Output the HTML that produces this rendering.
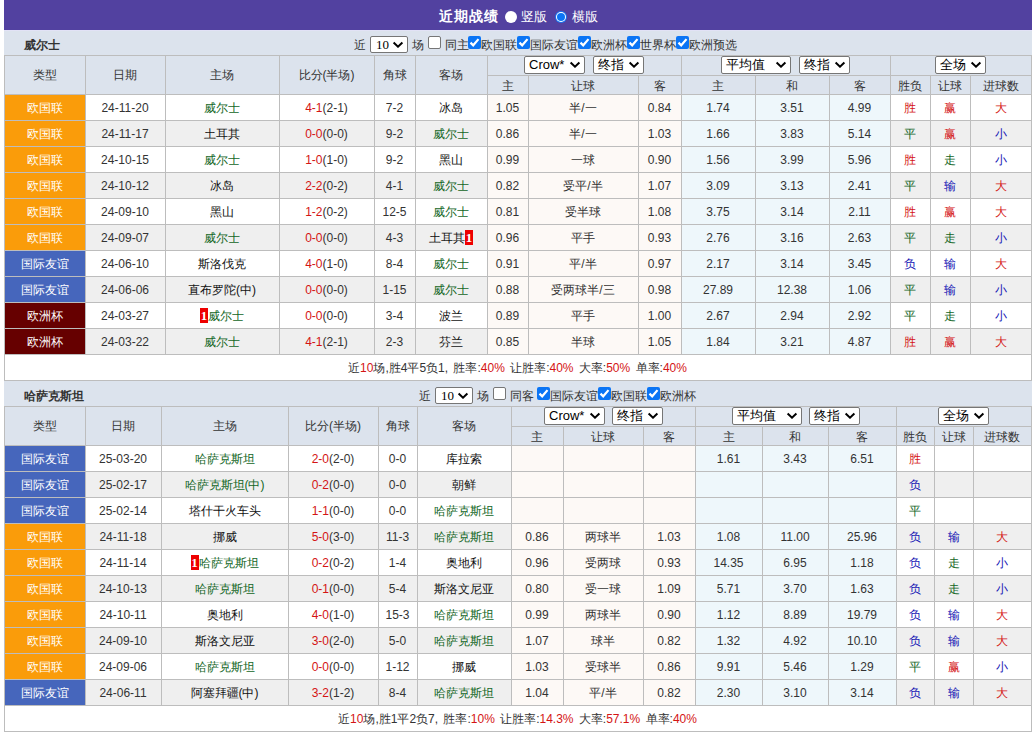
<!DOCTYPE html>
<html><head><meta charset="utf-8"><style>
html,body{margin:0;padding:0;background:#fff;width:1032px;height:732px;overflow:hidden}
body{position:relative;font-family:'Liberation Sans', sans-serif;font-size:12px}
body>div{position:absolute}
.c{display:flex;align-items:center;justify-content:center;white-space:nowrap;font-size:12px;line-height:16px;box-sizing:border-box;padding-right:1px}
.sel{background:#fff;border:1px solid #767676;border-radius:2px;color:#000}
.sel span{display:block}
.bd{display:inline-block;background:#e00;color:#fff;width:8px;height:15px;line-height:15px;text-align:center;font-size:13px;font-weight:bold;font-family:'Liberation Serif',serif;vertical-align:top;position:relative;top:0px}
</style></head><body>
<div style="left:4px;top:0px;width:1028px;height:30px;background:#5241a0;"></div><div style="left:439px;top:5px;white-space:nowrap;color:#fff;font-weight:bold;font-size:14px;letter-spacing:1px;line-height:22px">近期战绩</div><div style="left:505px;top:11px;width:12px;height:12px;border-radius:50%;background:#fff"></div><div style="left:521px;top:6px;white-space:nowrap;color:#fff;font-size:13px;line-height:22px">竖版</div><div style="left:555px;top:11px;width:12px;height:12px;border-radius:50%;background:#1a73f0"></div><div style="left:556px;top:12px;width:10px;height:10px;border-radius:50%;background:#fff"></div><div style="left:557px;top:13px;width:8px;height:8px;border-radius:50%;background:#0b75f5"></div><div style="left:572px;top:6px;white-space:nowrap;color:#fff;font-size:13px;line-height:22px">横版</div><div style="left:4px;top:30px;width:1028px;height:25px;background:#dce3ed;"></div><div style="left:24px;top:36px;white-space:nowrap;font-weight:bold;font-size:12px;line-height:18px;color:#333">威尔士</div><div style="left:4px;top:30px;width:1028px;height:1px;background:#e2e2f6;"></div><div style="left:354px;top:37px;white-space:nowrap;font-size:12px;line-height:17px;color:#333">近</div><div class="sel" style="left:370px;top:36px;width:36px;height:15px;"><span style="position:absolute;left:5px;top:0px;line-height:15px;font-size:13px;font-family:'Liberation Serif', serif">10</span><span style="position:absolute;left:21px;top:4px"><svg width="12" height="7" viewBox="-1 -1 12 7" style="display:block"><path d="M0.6 0.6 L5.0 4.7 L9.4 0.6" fill="none" stroke="#000" stroke-width="2" stroke-linecap="butt" stroke-linejoin="miter"/></svg></span></div><div style="left:412px;top:37px;white-space:nowrap;font-size:12px;line-height:17px;color:#333">场</div><div style="left:428px;top:36px;width:11px;height:11px;background:#fff;border:1px solid #767676;border-radius:2px"></div><div style="left:445px;top:37px;white-space:nowrap;font-size:12px;line-height:17px;color:#333">同主</div><div style="left:468px;top:36px;width:13px;height:13px;background:#0b75f5;border-radius:2px"><svg width="13" height="13" viewBox="0 0 13 13" style="position:absolute;left:0;top:0"><path d="M2.5 6.6 L5.2 9.3 L10.5 3.1" fill="none" stroke="#fff" stroke-width="2.2"/></svg></div><div style="left:481px;top:37px;white-space:nowrap;font-size:12px;line-height:17px;color:#333">欧国联</div><div style="left:517px;top:36px;width:13px;height:13px;background:#0b75f5;border-radius:2px"><svg width="13" height="13" viewBox="0 0 13 13" style="position:absolute;left:0;top:0"><path d="M2.5 6.6 L5.2 9.3 L10.5 3.1" fill="none" stroke="#fff" stroke-width="2.2"/></svg></div><div style="left:530px;top:37px;white-space:nowrap;font-size:12px;line-height:17px;color:#333">国际友谊</div><div style="left:578px;top:36px;width:13px;height:13px;background:#0b75f5;border-radius:2px"><svg width="13" height="13" viewBox="0 0 13 13" style="position:absolute;left:0;top:0"><path d="M2.5 6.6 L5.2 9.3 L10.5 3.1" fill="none" stroke="#fff" stroke-width="2.2"/></svg></div><div style="left:591px;top:37px;white-space:nowrap;font-size:12px;line-height:17px;color:#333">欧洲杯</div><div style="left:627px;top:36px;width:13px;height:13px;background:#0b75f5;border-radius:2px"><svg width="13" height="13" viewBox="0 0 13 13" style="position:absolute;left:0;top:0"><path d="M2.5 6.6 L5.2 9.3 L10.5 3.1" fill="none" stroke="#fff" stroke-width="2.2"/></svg></div><div style="left:640px;top:37px;white-space:nowrap;font-size:12px;line-height:17px;color:#333">世界杯</div><div style="left:676px;top:36px;width:13px;height:13px;background:#0b75f5;border-radius:2px"><svg width="13" height="13" viewBox="0 0 13 13" style="position:absolute;left:0;top:0"><path d="M2.5 6.6 L5.2 9.3 L10.5 3.1" fill="none" stroke="#fff" stroke-width="2.2"/></svg></div><div style="left:689px;top:37px;white-space:nowrap;font-size:12px;line-height:17px;color:#333">欧洲预选</div><div style="left:4px;top:55px;width:1028px;height:326px;background:#bdbdbd;"></div><div class="c" style="left:5px;top:56px;width:80px;height:38px;background:#dce3ed;color:#333"><span>类型</span></div><div class="c" style="left:86px;top:56px;width:79px;height:38px;background:#dce3ed;color:#333"><span>日期</span></div><div class="c" style="left:166px;top:56px;width:113px;height:38px;background:#dce3ed;color:#333"><span>主场</span></div><div class="c" style="left:280px;top:56px;width:94px;height:38px;background:#dce3ed;color:#333"><span>比分(半场)</span></div><div class="c" style="left:375px;top:56px;width:40px;height:38px;background:#dce3ed;color:#333"><span>角球</span></div><div class="c" style="left:416px;top:56px;width:71px;height:38px;background:#dce3ed;color:#333"><span>客场</span></div><div class="c" style="left:488px;top:56px;width:193px;height:19px;background:#dce3ed"><span></span></div><div class="c" style="left:682px;top:56px;width:208px;height:19px;background:#dce3ed"><span></span></div><div class="c" style="left:891px;top:56px;width:140px;height:19px;background:#dce3ed"><span></span></div><div class="c" style="left:488px;top:76px;width:40px;height:18px;background:#dce3ed;color:#333;padding-top:1px;box-sizing:border-box"><span>主</span></div><div class="c" style="left:529px;top:76px;width:109px;height:18px;background:#dce3ed;color:#333;padding-top:1px;box-sizing:border-box"><span>让球</span></div><div class="c" style="left:639px;top:76px;width:42px;height:18px;background:#dce3ed;color:#333;padding-top:1px;box-sizing:border-box"><span>客</span></div><div class="c" style="left:682px;top:76px;width:73px;height:18px;background:#dce3ed;color:#333;padding-top:1px;box-sizing:border-box"><span>主</span></div><div class="c" style="left:756px;top:76px;width:73px;height:18px;background:#dce3ed;color:#333;padding-top:1px;box-sizing:border-box"><span>和</span></div><div class="c" style="left:830px;top:76px;width:60px;height:18px;background:#dce3ed;color:#333;padding-top:1px;box-sizing:border-box"><span>客</span></div><div class="c" style="left:891px;top:76px;width:39px;height:18px;background:#dce3ed;color:#333;padding-top:1px;box-sizing:border-box"><span>胜负</span></div><div class="c" style="left:931px;top:76px;width:39px;height:18px;background:#dce3ed;color:#333;padding-top:1px;box-sizing:border-box"><span>让球</span></div><div class="c" style="left:971px;top:76px;width:60px;height:18px;background:#dce3ed;color:#333;padding-top:1px;box-sizing:border-box"><span>进球数</span></div><div class="c" style="left:5px;top:95px;width:80px;height:25px;background:#fa9c0a;color:#fff"><span>欧国联</span></div><div class="c" style="left:86px;top:95px;width:79px;height:25px;background:#fff;color:#333"><span>24-11-20</span></div><div class="c" style="left:166px;top:95px;width:113px;height:25px;background:#fff;color:#111"><span><span style="color:#12661e">威尔士</span></span></div><div class="c" style="left:280px;top:95px;width:94px;height:25px;background:#fff;color:#333"><span><span style="color:#d41414">4-1</span>(2-1)</span></div><div class="c" style="left:375px;top:95px;width:40px;height:25px;background:#fff;color:#333"><span>7-2</span></div><div class="c" style="left:416px;top:95px;width:71px;height:25px;background:#fff;color:#111"><span>冰岛</span></div><div class="c" style="left:488px;top:95px;width:40px;height:25px;background:#fdf9f6;color:#333"><span>1.05</span></div><div class="c" style="left:529px;top:95px;width:109px;height:25px;background:#fdf9f6;color:#333"><span>半/一</span></div><div class="c" style="left:639px;top:95px;width:42px;height:25px;background:#fdf9f6;color:#333"><span>0.84</span></div><div class="c" style="left:682px;top:95px;width:73px;height:25px;background:#eef7fb;color:#333"><span>1.74</span></div><div class="c" style="left:756px;top:95px;width:73px;height:25px;background:#eef7fb;color:#333"><span>3.51</span></div><div class="c" style="left:830px;top:95px;width:60px;height:25px;background:#eef7fb;color:#333"><span>4.99</span></div><div class="c" style="left:891px;top:95px;width:39px;height:25px;background:#fff;color:#d41414"><span>胜</span></div><div class="c" style="left:931px;top:95px;width:39px;height:25px;background:#fff;color:#d41414"><span>赢</span></div><div class="c" style="left:971px;top:95px;width:60px;height:25px;background:#fff;color:#d41414"><span>大</span></div><div class="c" style="left:5px;top:121px;width:80px;height:25px;background:#fa9c0a;color:#fff"><span>欧国联</span></div><div class="c" style="left:86px;top:121px;width:79px;height:25px;background:#efefef;color:#333"><span>24-11-17</span></div><div class="c" style="left:166px;top:121px;width:113px;height:25px;background:#efefef;color:#111"><span>土耳其</span></div><div class="c" style="left:280px;top:121px;width:94px;height:25px;background:#efefef;color:#333"><span><span style="color:#d41414">0-0</span>(0-0)</span></div><div class="c" style="left:375px;top:121px;width:40px;height:25px;background:#efefef;color:#333"><span>9-2</span></div><div class="c" style="left:416px;top:121px;width:71px;height:25px;background:#efefef;color:#111"><span><span style="color:#12661e">威尔士</span></span></div><div class="c" style="left:488px;top:121px;width:40px;height:25px;background:#fdf9f6;color:#333"><span>0.86</span></div><div class="c" style="left:529px;top:121px;width:109px;height:25px;background:#fdf9f6;color:#333"><span>半/一</span></div><div class="c" style="left:639px;top:121px;width:42px;height:25px;background:#fdf9f6;color:#333"><span>1.03</span></div><div class="c" style="left:682px;top:121px;width:73px;height:25px;background:#eef7fb;color:#333"><span>1.66</span></div><div class="c" style="left:756px;top:121px;width:73px;height:25px;background:#eef7fb;color:#333"><span>3.83</span></div><div class="c" style="left:830px;top:121px;width:60px;height:25px;background:#eef7fb;color:#333"><span>5.14</span></div><div class="c" style="left:891px;top:121px;width:39px;height:25px;background:#efefef;color:#12661e"><span>平</span></div><div class="c" style="left:931px;top:121px;width:39px;height:25px;background:#efefef;color:#d41414"><span>赢</span></div><div class="c" style="left:971px;top:121px;width:60px;height:25px;background:#efefef;color:#1414b4"><span>小</span></div><div class="c" style="left:5px;top:147px;width:80px;height:25px;background:#fa9c0a;color:#fff"><span>欧国联</span></div><div class="c" style="left:86px;top:147px;width:79px;height:25px;background:#fff;color:#333"><span>24-10-15</span></div><div class="c" style="left:166px;top:147px;width:113px;height:25px;background:#fff;color:#111"><span><span style="color:#12661e">威尔士</span></span></div><div class="c" style="left:280px;top:147px;width:94px;height:25px;background:#fff;color:#333"><span><span style="color:#d41414">1-0</span>(1-0)</span></div><div class="c" style="left:375px;top:147px;width:40px;height:25px;background:#fff;color:#333"><span>9-2</span></div><div class="c" style="left:416px;top:147px;width:71px;height:25px;background:#fff;color:#111"><span>黑山</span></div><div class="c" style="left:488px;top:147px;width:40px;height:25px;background:#fdf9f6;color:#333"><span>0.99</span></div><div class="c" style="left:529px;top:147px;width:109px;height:25px;background:#fdf9f6;color:#333"><span>一球</span></div><div class="c" style="left:639px;top:147px;width:42px;height:25px;background:#fdf9f6;color:#333"><span>0.90</span></div><div class="c" style="left:682px;top:147px;width:73px;height:25px;background:#eef7fb;color:#333"><span>1.56</span></div><div class="c" style="left:756px;top:147px;width:73px;height:25px;background:#eef7fb;color:#333"><span>3.99</span></div><div class="c" style="left:830px;top:147px;width:60px;height:25px;background:#eef7fb;color:#333"><span>5.96</span></div><div class="c" style="left:891px;top:147px;width:39px;height:25px;background:#fff;color:#d41414"><span>胜</span></div><div class="c" style="left:931px;top:147px;width:39px;height:25px;background:#fff;color:#12661e"><span>走</span></div><div class="c" style="left:971px;top:147px;width:60px;height:25px;background:#fff;color:#1414b4"><span>小</span></div><div class="c" style="left:5px;top:173px;width:80px;height:25px;background:#fa9c0a;color:#fff"><span>欧国联</span></div><div class="c" style="left:86px;top:173px;width:79px;height:25px;background:#efefef;color:#333"><span>24-10-12</span></div><div class="c" style="left:166px;top:173px;width:113px;height:25px;background:#efefef;color:#111"><span>冰岛</span></div><div class="c" style="left:280px;top:173px;width:94px;height:25px;background:#efefef;color:#333"><span><span style="color:#d41414">2-2</span>(0-2)</span></div><div class="c" style="left:375px;top:173px;width:40px;height:25px;background:#efefef;color:#333"><span>4-1</span></div><div class="c" style="left:416px;top:173px;width:71px;height:25px;background:#efefef;color:#111"><span><span style="color:#12661e">威尔士</span></span></div><div class="c" style="left:488px;top:173px;width:40px;height:25px;background:#fdf9f6;color:#333"><span>0.82</span></div><div class="c" style="left:529px;top:173px;width:109px;height:25px;background:#fdf9f6;color:#333"><span>受平/半</span></div><div class="c" style="left:639px;top:173px;width:42px;height:25px;background:#fdf9f6;color:#333"><span>1.07</span></div><div class="c" style="left:682px;top:173px;width:73px;height:25px;background:#eef7fb;color:#333"><span>3.09</span></div><div class="c" style="left:756px;top:173px;width:73px;height:25px;background:#eef7fb;color:#333"><span>3.13</span></div><div class="c" style="left:830px;top:173px;width:60px;height:25px;background:#eef7fb;color:#333"><span>2.41</span></div><div class="c" style="left:891px;top:173px;width:39px;height:25px;background:#efefef;color:#12661e"><span>平</span></div><div class="c" style="left:931px;top:173px;width:39px;height:25px;background:#efefef;color:#1414b4"><span>输</span></div><div class="c" style="left:971px;top:173px;width:60px;height:25px;background:#efefef;color:#d41414"><span>大</span></div><div class="c" style="left:5px;top:199px;width:80px;height:25px;background:#fa9c0a;color:#fff"><span>欧国联</span></div><div class="c" style="left:86px;top:199px;width:79px;height:25px;background:#fff;color:#333"><span>24-09-10</span></div><div class="c" style="left:166px;top:199px;width:113px;height:25px;background:#fff;color:#111"><span>黑山</span></div><div class="c" style="left:280px;top:199px;width:94px;height:25px;background:#fff;color:#333"><span><span style="color:#d41414">1-2</span>(0-2)</span></div><div class="c" style="left:375px;top:199px;width:40px;height:25px;background:#fff;color:#333"><span>12-5</span></div><div class="c" style="left:416px;top:199px;width:71px;height:25px;background:#fff;color:#111"><span><span style="color:#12661e">威尔士</span></span></div><div class="c" style="left:488px;top:199px;width:40px;height:25px;background:#fdf9f6;color:#333"><span>0.81</span></div><div class="c" style="left:529px;top:199px;width:109px;height:25px;background:#fdf9f6;color:#333"><span>受半球</span></div><div class="c" style="left:639px;top:199px;width:42px;height:25px;background:#fdf9f6;color:#333"><span>1.08</span></div><div class="c" style="left:682px;top:199px;width:73px;height:25px;background:#eef7fb;color:#333"><span>3.75</span></div><div class="c" style="left:756px;top:199px;width:73px;height:25px;background:#eef7fb;color:#333"><span>3.14</span></div><div class="c" style="left:830px;top:199px;width:60px;height:25px;background:#eef7fb;color:#333"><span>2.11</span></div><div class="c" style="left:891px;top:199px;width:39px;height:25px;background:#fff;color:#d41414"><span>胜</span></div><div class="c" style="left:931px;top:199px;width:39px;height:25px;background:#fff;color:#d41414"><span>赢</span></div><div class="c" style="left:971px;top:199px;width:60px;height:25px;background:#fff;color:#d41414"><span>大</span></div><div class="c" style="left:5px;top:225px;width:80px;height:25px;background:#fa9c0a;color:#fff"><span>欧国联</span></div><div class="c" style="left:86px;top:225px;width:79px;height:25px;background:#efefef;color:#333"><span>24-09-07</span></div><div class="c" style="left:166px;top:225px;width:113px;height:25px;background:#efefef;color:#111"><span><span style="color:#12661e">威尔士</span></span></div><div class="c" style="left:280px;top:225px;width:94px;height:25px;background:#efefef;color:#333"><span><span style="color:#d41414">0-0</span>(0-0)</span></div><div class="c" style="left:375px;top:225px;width:40px;height:25px;background:#efefef;color:#333"><span>4-3</span></div><div class="c" style="left:416px;top:225px;width:71px;height:25px;background:#efefef;color:#111"><span>土耳其<span class="bd">1</span></span></div><div class="c" style="left:488px;top:225px;width:40px;height:25px;background:#fdf9f6;color:#333"><span>0.96</span></div><div class="c" style="left:529px;top:225px;width:109px;height:25px;background:#fdf9f6;color:#333"><span>平手</span></div><div class="c" style="left:639px;top:225px;width:42px;height:25px;background:#fdf9f6;color:#333"><span>0.93</span></div><div class="c" style="left:682px;top:225px;width:73px;height:25px;background:#eef7fb;color:#333"><span>2.76</span></div><div class="c" style="left:756px;top:225px;width:73px;height:25px;background:#eef7fb;color:#333"><span>3.16</span></div><div class="c" style="left:830px;top:225px;width:60px;height:25px;background:#eef7fb;color:#333"><span>2.63</span></div><div class="c" style="left:891px;top:225px;width:39px;height:25px;background:#efefef;color:#12661e"><span>平</span></div><div class="c" style="left:931px;top:225px;width:39px;height:25px;background:#efefef;color:#12661e"><span>走</span></div><div class="c" style="left:971px;top:225px;width:60px;height:25px;background:#efefef;color:#1414b4"><span>小</span></div><div class="c" style="left:5px;top:251px;width:80px;height:25px;background:#4666bc;color:#fff"><span>国际友谊</span></div><div class="c" style="left:86px;top:251px;width:79px;height:25px;background:#fff;color:#333"><span>24-06-10</span></div><div class="c" style="left:166px;top:251px;width:113px;height:25px;background:#fff;color:#111"><span>斯洛伐克</span></div><div class="c" style="left:280px;top:251px;width:94px;height:25px;background:#fff;color:#333"><span><span style="color:#d41414">4-0</span>(1-0)</span></div><div class="c" style="left:375px;top:251px;width:40px;height:25px;background:#fff;color:#333"><span>8-4</span></div><div class="c" style="left:416px;top:251px;width:71px;height:25px;background:#fff;color:#111"><span><span style="color:#12661e">威尔士</span></span></div><div class="c" style="left:488px;top:251px;width:40px;height:25px;background:#fdf9f6;color:#333"><span>0.91</span></div><div class="c" style="left:529px;top:251px;width:109px;height:25px;background:#fdf9f6;color:#333"><span>平/半</span></div><div class="c" style="left:639px;top:251px;width:42px;height:25px;background:#fdf9f6;color:#333"><span>0.97</span></div><div class="c" style="left:682px;top:251px;width:73px;height:25px;background:#eef7fb;color:#333"><span>2.17</span></div><div class="c" style="left:756px;top:251px;width:73px;height:25px;background:#eef7fb;color:#333"><span>3.14</span></div><div class="c" style="left:830px;top:251px;width:60px;height:25px;background:#eef7fb;color:#333"><span>3.45</span></div><div class="c" style="left:891px;top:251px;width:39px;height:25px;background:#fff;color:#1414b4"><span>负</span></div><div class="c" style="left:931px;top:251px;width:39px;height:25px;background:#fff;color:#1414b4"><span>输</span></div><div class="c" style="left:971px;top:251px;width:60px;height:25px;background:#fff;color:#d41414"><span>大</span></div><div class="c" style="left:5px;top:277px;width:80px;height:25px;background:#4666bc;color:#fff"><span>国际友谊</span></div><div class="c" style="left:86px;top:277px;width:79px;height:25px;background:#efefef;color:#333"><span>24-06-06</span></div><div class="c" style="left:166px;top:277px;width:113px;height:25px;background:#efefef;color:#111"><span>直布罗陀(中)</span></div><div class="c" style="left:280px;top:277px;width:94px;height:25px;background:#efefef;color:#333"><span><span style="color:#d41414">0-0</span>(0-0)</span></div><div class="c" style="left:375px;top:277px;width:40px;height:25px;background:#efefef;color:#333"><span>1-15</span></div><div class="c" style="left:416px;top:277px;width:71px;height:25px;background:#efefef;color:#111"><span><span style="color:#12661e">威尔士</span></span></div><div class="c" style="left:488px;top:277px;width:40px;height:25px;background:#fdf9f6;color:#333"><span>0.88</span></div><div class="c" style="left:529px;top:277px;width:109px;height:25px;background:#fdf9f6;color:#333"><span>受两球半/三</span></div><div class="c" style="left:639px;top:277px;width:42px;height:25px;background:#fdf9f6;color:#333"><span>0.98</span></div><div class="c" style="left:682px;top:277px;width:73px;height:25px;background:#eef7fb;color:#333"><span>27.89</span></div><div class="c" style="left:756px;top:277px;width:73px;height:25px;background:#eef7fb;color:#333"><span>12.38</span></div><div class="c" style="left:830px;top:277px;width:60px;height:25px;background:#eef7fb;color:#333"><span>1.06</span></div><div class="c" style="left:891px;top:277px;width:39px;height:25px;background:#efefef;color:#12661e"><span>平</span></div><div class="c" style="left:931px;top:277px;width:39px;height:25px;background:#efefef;color:#1414b4"><span>输</span></div><div class="c" style="left:971px;top:277px;width:60px;height:25px;background:#efefef;color:#1414b4"><span>小</span></div><div class="c" style="left:5px;top:303px;width:80px;height:25px;background:#660000;color:#fff"><span>欧洲杯</span></div><div class="c" style="left:86px;top:303px;width:79px;height:25px;background:#fff;color:#333"><span>24-03-27</span></div><div class="c" style="left:166px;top:303px;width:113px;height:25px;background:#fff;color:#111"><span><span class="bd">1</span><span style="color:#12661e">威尔士</span></span></div><div class="c" style="left:280px;top:303px;width:94px;height:25px;background:#fff;color:#333"><span><span style="color:#d41414">0-0</span>(0-0)</span></div><div class="c" style="left:375px;top:303px;width:40px;height:25px;background:#fff;color:#333"><span>3-4</span></div><div class="c" style="left:416px;top:303px;width:71px;height:25px;background:#fff;color:#111"><span>波兰</span></div><div class="c" style="left:488px;top:303px;width:40px;height:25px;background:#fdf9f6;color:#333"><span>0.89</span></div><div class="c" style="left:529px;top:303px;width:109px;height:25px;background:#fdf9f6;color:#333"><span>平手</span></div><div class="c" style="left:639px;top:303px;width:42px;height:25px;background:#fdf9f6;color:#333"><span>1.00</span></div><div class="c" style="left:682px;top:303px;width:73px;height:25px;background:#eef7fb;color:#333"><span>2.67</span></div><div class="c" style="left:756px;top:303px;width:73px;height:25px;background:#eef7fb;color:#333"><span>2.94</span></div><div class="c" style="left:830px;top:303px;width:60px;height:25px;background:#eef7fb;color:#333"><span>2.92</span></div><div class="c" style="left:891px;top:303px;width:39px;height:25px;background:#fff;color:#12661e"><span>平</span></div><div class="c" style="left:931px;top:303px;width:39px;height:25px;background:#fff;color:#12661e"><span>走</span></div><div class="c" style="left:971px;top:303px;width:60px;height:25px;background:#fff;color:#1414b4"><span>小</span></div><div class="c" style="left:5px;top:329px;width:80px;height:25px;background:#660000;color:#fff"><span>欧洲杯</span></div><div class="c" style="left:86px;top:329px;width:79px;height:25px;background:#efefef;color:#333"><span>24-03-22</span></div><div class="c" style="left:166px;top:329px;width:113px;height:25px;background:#efefef;color:#111"><span><span style="color:#12661e">威尔士</span></span></div><div class="c" style="left:280px;top:329px;width:94px;height:25px;background:#efefef;color:#333"><span><span style="color:#d41414">4-1</span>(2-1)</span></div><div class="c" style="left:375px;top:329px;width:40px;height:25px;background:#efefef;color:#333"><span>2-3</span></div><div class="c" style="left:416px;top:329px;width:71px;height:25px;background:#efefef;color:#111"><span>芬兰</span></div><div class="c" style="left:488px;top:329px;width:40px;height:25px;background:#fdf9f6;color:#333"><span>0.85</span></div><div class="c" style="left:529px;top:329px;width:109px;height:25px;background:#fdf9f6;color:#333"><span>半球</span></div><div class="c" style="left:639px;top:329px;width:42px;height:25px;background:#fdf9f6;color:#333"><span>1.05</span></div><div class="c" style="left:682px;top:329px;width:73px;height:25px;background:#eef7fb;color:#333"><span>1.84</span></div><div class="c" style="left:756px;top:329px;width:73px;height:25px;background:#eef7fb;color:#333"><span>3.21</span></div><div class="c" style="left:830px;top:329px;width:60px;height:25px;background:#eef7fb;color:#333"><span>4.87</span></div><div class="c" style="left:891px;top:329px;width:39px;height:25px;background:#efefef;color:#d41414"><span>胜</span></div><div class="c" style="left:931px;top:329px;width:39px;height:25px;background:#efefef;color:#d41414"><span>赢</span></div><div class="c" style="left:971px;top:329px;width:60px;height:25px;background:#efefef;color:#d41414"><span>大</span></div><div class="c" style="left:5px;top:355px;width:1026px;height:25px;background:#fff;color:#333;word-spacing:2px"><span>近<span style="color:#d41414">10</span>场,胜4平5负1, 胜率:<span style="color:#d41414">40%</span> 让胜率:<span style="color:#d41414">40%</span> 大率:<span style="color:#d41414">50%</span> 单率:<span style="color:#d41414">40%</span></span></div><div class="sel" style="left:524px;top:56px;width:59px;height:16px;"><span style="position:absolute;left:4px;top:0px;line-height:16px;font-size:13px;font-family:'Liberation Sans', sans-serif">Crow*</span><span style="position:absolute;left:44px;top:4px"><svg width="12" height="7" viewBox="-1 -1 12 7" style="display:block"><path d="M0.6 0.6 L5.0 4.7 L9.4 0.6" fill="none" stroke="#000" stroke-width="2" stroke-linecap="butt" stroke-linejoin="miter"/></svg></span></div><div class="sel" style="left:593px;top:56px;width:49px;height:16px;"><span style="position:absolute;left:4px;top:0px;line-height:16px;font-size:13px;font-family:'Liberation Sans', sans-serif">终指</span><span style="position:absolute;left:34px;top:4px"><svg width="12" height="7" viewBox="-1 -1 12 7" style="display:block"><path d="M0.6 0.6 L5.0 4.7 L9.4 0.6" fill="none" stroke="#000" stroke-width="2" stroke-linecap="butt" stroke-linejoin="miter"/></svg></span></div><div class="sel" style="left:721px;top:56px;width:68px;height:16px;"><span style="position:absolute;left:4px;top:0px;line-height:16px;font-size:13px;font-family:'Liberation Sans', sans-serif">平均值 </span><span style="position:absolute;left:53px;top:4px"><svg width="12" height="7" viewBox="-1 -1 12 7" style="display:block"><path d="M0.6 0.6 L5.0 4.7 L9.4 0.6" fill="none" stroke="#000" stroke-width="2" stroke-linecap="butt" stroke-linejoin="miter"/></svg></span></div><div class="sel" style="left:799px;top:56px;width:49px;height:16px;"><span style="position:absolute;left:4px;top:0px;line-height:16px;font-size:13px;font-family:'Liberation Sans', sans-serif">终指</span><span style="position:absolute;left:34px;top:4px"><svg width="12" height="7" viewBox="-1 -1 12 7" style="display:block"><path d="M0.6 0.6 L5.0 4.7 L9.4 0.6" fill="none" stroke="#000" stroke-width="2" stroke-linecap="butt" stroke-linejoin="miter"/></svg></span></div><div class="sel" style="left:935px;top:56px;width:49px;height:16px;"><span style="position:absolute;left:4px;top:0px;line-height:16px;font-size:13px;font-family:'Liberation Sans', sans-serif">全场</span><span style="position:absolute;left:34px;top:4px"><svg width="12" height="7" viewBox="-1 -1 12 7" style="display:block"><path d="M0.6 0.6 L5.0 4.7 L9.4 0.6" fill="none" stroke="#000" stroke-width="2" stroke-linecap="butt" stroke-linejoin="miter"/></svg></span></div><div style="left:4px;top:381px;width:1028px;height:25px;background:#dce3ed;"></div><div style="left:24px;top:387px;white-space:nowrap;font-weight:bold;font-size:12px;line-height:18px;color:#333">哈萨克斯坦</div><div style="left:419px;top:388px;white-space:nowrap;font-size:12px;line-height:17px;color:#333">近</div><div class="sel" style="left:435px;top:387px;width:36px;height:15px;"><span style="position:absolute;left:5px;top:0px;line-height:15px;font-size:13px;font-family:'Liberation Serif', serif">10</span><span style="position:absolute;left:21px;top:4px"><svg width="12" height="7" viewBox="-1 -1 12 7" style="display:block"><path d="M0.6 0.6 L5.0 4.7 L9.4 0.6" fill="none" stroke="#000" stroke-width="2" stroke-linecap="butt" stroke-linejoin="miter"/></svg></span></div><div style="left:477px;top:388px;white-space:nowrap;font-size:12px;line-height:17px;color:#333">场</div><div style="left:493px;top:387px;width:11px;height:11px;background:#fff;border:1px solid #767676;border-radius:2px"></div><div style="left:510px;top:388px;white-space:nowrap;font-size:12px;line-height:17px;color:#333">同客</div><div style="left:537px;top:387px;width:13px;height:13px;background:#0b75f5;border-radius:2px"><svg width="13" height="13" viewBox="0 0 13 13" style="position:absolute;left:0;top:0"><path d="M2.5 6.6 L5.2 9.3 L10.5 3.1" fill="none" stroke="#fff" stroke-width="2.2"/></svg></div><div style="left:550px;top:388px;white-space:nowrap;font-size:12px;line-height:17px;color:#333">国际友谊</div><div style="left:598px;top:387px;width:13px;height:13px;background:#0b75f5;border-radius:2px"><svg width="13" height="13" viewBox="0 0 13 13" style="position:absolute;left:0;top:0"><path d="M2.5 6.6 L5.2 9.3 L10.5 3.1" fill="none" stroke="#fff" stroke-width="2.2"/></svg></div><div style="left:611px;top:388px;white-space:nowrap;font-size:12px;line-height:17px;color:#333">欧国联</div><div style="left:647px;top:387px;width:13px;height:13px;background:#0b75f5;border-radius:2px"><svg width="13" height="13" viewBox="0 0 13 13" style="position:absolute;left:0;top:0"><path d="M2.5 6.6 L5.2 9.3 L10.5 3.1" fill="none" stroke="#fff" stroke-width="2.2"/></svg></div><div style="left:660px;top:388px;white-space:nowrap;font-size:12px;line-height:17px;color:#333">欧洲杯</div><div style="left:4px;top:406px;width:1028px;height:326px;background:#bdbdbd;"></div><div class="c" style="left:5px;top:407px;width:80px;height:38px;background:#dce3ed;color:#333"><span>类型</span></div><div class="c" style="left:86px;top:407px;width:75px;height:38px;background:#dce3ed;color:#333"><span>日期</span></div><div class="c" style="left:162px;top:407px;width:126px;height:38px;background:#dce3ed;color:#333"><span>主场</span></div><div class="c" style="left:289px;top:407px;width:89px;height:38px;background:#dce3ed;color:#333"><span>比分(半场)</span></div><div class="c" style="left:379px;top:407px;width:38px;height:38px;background:#dce3ed;color:#333"><span>角球</span></div><div class="c" style="left:418px;top:407px;width:93px;height:38px;background:#dce3ed;color:#333"><span>客场</span></div><div class="c" style="left:512px;top:407px;width:183px;height:19px;background:#dce3ed"><span></span></div><div class="c" style="left:696px;top:407px;width:200px;height:19px;background:#dce3ed"><span></span></div><div class="c" style="left:897px;top:407px;width:134px;height:19px;background:#dce3ed"><span></span></div><div class="c" style="left:512px;top:427px;width:51px;height:18px;background:#dce3ed;color:#333;padding-top:1px;box-sizing:border-box"><span>主</span></div><div class="c" style="left:564px;top:427px;width:79px;height:18px;background:#dce3ed;color:#333;padding-top:1px;box-sizing:border-box"><span>让球</span></div><div class="c" style="left:644px;top:427px;width:51px;height:18px;background:#dce3ed;color:#333;padding-top:1px;box-sizing:border-box"><span>客</span></div><div class="c" style="left:696px;top:427px;width:66px;height:18px;background:#dce3ed;color:#333;padding-top:1px;box-sizing:border-box"><span>主</span></div><div class="c" style="left:763px;top:427px;width:65px;height:18px;background:#dce3ed;color:#333;padding-top:1px;box-sizing:border-box"><span>和</span></div><div class="c" style="left:829px;top:427px;width:67px;height:18px;background:#dce3ed;color:#333;padding-top:1px;box-sizing:border-box"><span>客</span></div><div class="c" style="left:897px;top:427px;width:37px;height:18px;background:#dce3ed;color:#333;padding-top:1px;box-sizing:border-box"><span>胜负</span></div><div class="c" style="left:935px;top:427px;width:38px;height:18px;background:#dce3ed;color:#333;padding-top:1px;box-sizing:border-box"><span>让球</span></div><div class="c" style="left:974px;top:427px;width:57px;height:18px;background:#dce3ed;color:#333;padding-top:1px;box-sizing:border-box"><span>进球数</span></div><div class="c" style="left:5px;top:446px;width:80px;height:25px;background:#4666bc;color:#fff"><span>国际友谊</span></div><div class="c" style="left:86px;top:446px;width:75px;height:25px;background:#fff;color:#333"><span>25-03-20</span></div><div class="c" style="left:162px;top:446px;width:126px;height:25px;background:#fff;color:#111"><span><span style="color:#12661e">哈萨克斯坦</span></span></div><div class="c" style="left:289px;top:446px;width:89px;height:25px;background:#fff;color:#333"><span><span style="color:#d41414">2-0</span>(2-0)</span></div><div class="c" style="left:379px;top:446px;width:38px;height:25px;background:#fff;color:#333"><span>0-0</span></div><div class="c" style="left:418px;top:446px;width:93px;height:25px;background:#fff;color:#111"><span>库拉索</span></div><div class="c" style="left:512px;top:446px;width:51px;height:25px;background:#fdf9f6;color:#333"><span></span></div><div class="c" style="left:564px;top:446px;width:79px;height:25px;background:#fdf9f6;color:#333"><span></span></div><div class="c" style="left:644px;top:446px;width:51px;height:25px;background:#fdf9f6;color:#333"><span></span></div><div class="c" style="left:696px;top:446px;width:66px;height:25px;background:#eef7fb;color:#333"><span>1.61</span></div><div class="c" style="left:763px;top:446px;width:65px;height:25px;background:#eef7fb;color:#333"><span>3.43</span></div><div class="c" style="left:829px;top:446px;width:67px;height:25px;background:#eef7fb;color:#333"><span>6.51</span></div><div class="c" style="left:897px;top:446px;width:37px;height:25px;background:#fff;color:#d41414"><span>胜</span></div><div class="c" style="left:935px;top:446px;width:38px;height:25px;background:#fff;color:#333"><span></span></div><div class="c" style="left:974px;top:446px;width:57px;height:25px;background:#fff;color:#333"><span></span></div><div class="c" style="left:5px;top:472px;width:80px;height:25px;background:#4666bc;color:#fff"><span>国际友谊</span></div><div class="c" style="left:86px;top:472px;width:75px;height:25px;background:#efefef;color:#333"><span>25-02-17</span></div><div class="c" style="left:162px;top:472px;width:126px;height:25px;background:#efefef;color:#111"><span><span style="color:#12661e">哈萨克斯坦(中)</span></span></div><div class="c" style="left:289px;top:472px;width:89px;height:25px;background:#efefef;color:#333"><span><span style="color:#d41414">0-2</span>(0-0)</span></div><div class="c" style="left:379px;top:472px;width:38px;height:25px;background:#efefef;color:#333"><span>0-0</span></div><div class="c" style="left:418px;top:472px;width:93px;height:25px;background:#efefef;color:#111"><span>朝鲜</span></div><div class="c" style="left:512px;top:472px;width:51px;height:25px;background:#fdf9f6;color:#333"><span></span></div><div class="c" style="left:564px;top:472px;width:79px;height:25px;background:#fdf9f6;color:#333"><span></span></div><div class="c" style="left:644px;top:472px;width:51px;height:25px;background:#fdf9f6;color:#333"><span></span></div><div class="c" style="left:696px;top:472px;width:66px;height:25px;background:#eef7fb;color:#333"><span></span></div><div class="c" style="left:763px;top:472px;width:65px;height:25px;background:#eef7fb;color:#333"><span></span></div><div class="c" style="left:829px;top:472px;width:67px;height:25px;background:#eef7fb;color:#333"><span></span></div><div class="c" style="left:897px;top:472px;width:37px;height:25px;background:#efefef;color:#1414b4"><span>负</span></div><div class="c" style="left:935px;top:472px;width:38px;height:25px;background:#efefef;color:#333"><span></span></div><div class="c" style="left:974px;top:472px;width:57px;height:25px;background:#efefef;color:#333"><span></span></div><div class="c" style="left:5px;top:498px;width:80px;height:25px;background:#4666bc;color:#fff"><span>国际友谊</span></div><div class="c" style="left:86px;top:498px;width:75px;height:25px;background:#fff;color:#333"><span>25-02-14</span></div><div class="c" style="left:162px;top:498px;width:126px;height:25px;background:#fff;color:#111"><span>塔什干火车头</span></div><div class="c" style="left:289px;top:498px;width:89px;height:25px;background:#fff;color:#333"><span><span style="color:#d41414">1-1</span>(0-0)</span></div><div class="c" style="left:379px;top:498px;width:38px;height:25px;background:#fff;color:#333"><span>0-0</span></div><div class="c" style="left:418px;top:498px;width:93px;height:25px;background:#fff;color:#111"><span><span style="color:#12661e">哈萨克斯坦</span></span></div><div class="c" style="left:512px;top:498px;width:51px;height:25px;background:#fdf9f6;color:#333"><span></span></div><div class="c" style="left:564px;top:498px;width:79px;height:25px;background:#fdf9f6;color:#333"><span></span></div><div class="c" style="left:644px;top:498px;width:51px;height:25px;background:#fdf9f6;color:#333"><span></span></div><div class="c" style="left:696px;top:498px;width:66px;height:25px;background:#eef7fb;color:#333"><span></span></div><div class="c" style="left:763px;top:498px;width:65px;height:25px;background:#eef7fb;color:#333"><span></span></div><div class="c" style="left:829px;top:498px;width:67px;height:25px;background:#eef7fb;color:#333"><span></span></div><div class="c" style="left:897px;top:498px;width:37px;height:25px;background:#fff;color:#12661e"><span>平</span></div><div class="c" style="left:935px;top:498px;width:38px;height:25px;background:#fff;color:#333"><span></span></div><div class="c" style="left:974px;top:498px;width:57px;height:25px;background:#fff;color:#333"><span></span></div><div class="c" style="left:5px;top:524px;width:80px;height:25px;background:#fa9c0a;color:#fff"><span>欧国联</span></div><div class="c" style="left:86px;top:524px;width:75px;height:25px;background:#efefef;color:#333"><span>24-11-18</span></div><div class="c" style="left:162px;top:524px;width:126px;height:25px;background:#efefef;color:#111"><span>挪威</span></div><div class="c" style="left:289px;top:524px;width:89px;height:25px;background:#efefef;color:#333"><span><span style="color:#d41414">5-0</span>(3-0)</span></div><div class="c" style="left:379px;top:524px;width:38px;height:25px;background:#efefef;color:#333"><span>11-3</span></div><div class="c" style="left:418px;top:524px;width:93px;height:25px;background:#efefef;color:#111"><span><span style="color:#12661e">哈萨克斯坦</span></span></div><div class="c" style="left:512px;top:524px;width:51px;height:25px;background:#fdf9f6;color:#333"><span>0.86</span></div><div class="c" style="left:564px;top:524px;width:79px;height:25px;background:#fdf9f6;color:#333"><span>两球半</span></div><div class="c" style="left:644px;top:524px;width:51px;height:25px;background:#fdf9f6;color:#333"><span>1.03</span></div><div class="c" style="left:696px;top:524px;width:66px;height:25px;background:#eef7fb;color:#333"><span>1.08</span></div><div class="c" style="left:763px;top:524px;width:65px;height:25px;background:#eef7fb;color:#333"><span>11.00</span></div><div class="c" style="left:829px;top:524px;width:67px;height:25px;background:#eef7fb;color:#333"><span>25.96</span></div><div class="c" style="left:897px;top:524px;width:37px;height:25px;background:#efefef;color:#1414b4"><span>负</span></div><div class="c" style="left:935px;top:524px;width:38px;height:25px;background:#efefef;color:#1414b4"><span>输</span></div><div class="c" style="left:974px;top:524px;width:57px;height:25px;background:#efefef;color:#d41414"><span>大</span></div><div class="c" style="left:5px;top:550px;width:80px;height:25px;background:#fa9c0a;color:#fff"><span>欧国联</span></div><div class="c" style="left:86px;top:550px;width:75px;height:25px;background:#fff;color:#333"><span>24-11-14</span></div><div class="c" style="left:162px;top:550px;width:126px;height:25px;background:#fff;color:#111"><span><span class="bd">1</span><span style="color:#12661e">哈萨克斯坦</span></span></div><div class="c" style="left:289px;top:550px;width:89px;height:25px;background:#fff;color:#333"><span><span style="color:#d41414">0-2</span>(0-2)</span></div><div class="c" style="left:379px;top:550px;width:38px;height:25px;background:#fff;color:#333"><span>1-4</span></div><div class="c" style="left:418px;top:550px;width:93px;height:25px;background:#fff;color:#111"><span>奥地利</span></div><div class="c" style="left:512px;top:550px;width:51px;height:25px;background:#fdf9f6;color:#333"><span>0.96</span></div><div class="c" style="left:564px;top:550px;width:79px;height:25px;background:#fdf9f6;color:#333"><span>受两球</span></div><div class="c" style="left:644px;top:550px;width:51px;height:25px;background:#fdf9f6;color:#333"><span>0.93</span></div><div class="c" style="left:696px;top:550px;width:66px;height:25px;background:#eef7fb;color:#333"><span>14.35</span></div><div class="c" style="left:763px;top:550px;width:65px;height:25px;background:#eef7fb;color:#333"><span>6.95</span></div><div class="c" style="left:829px;top:550px;width:67px;height:25px;background:#eef7fb;color:#333"><span>1.18</span></div><div class="c" style="left:897px;top:550px;width:37px;height:25px;background:#fff;color:#1414b4"><span>负</span></div><div class="c" style="left:935px;top:550px;width:38px;height:25px;background:#fff;color:#12661e"><span>走</span></div><div class="c" style="left:974px;top:550px;width:57px;height:25px;background:#fff;color:#1414b4"><span>小</span></div><div class="c" style="left:5px;top:576px;width:80px;height:25px;background:#fa9c0a;color:#fff"><span>欧国联</span></div><div class="c" style="left:86px;top:576px;width:75px;height:25px;background:#efefef;color:#333"><span>24-10-13</span></div><div class="c" style="left:162px;top:576px;width:126px;height:25px;background:#efefef;color:#111"><span><span style="color:#12661e">哈萨克斯坦</span></span></div><div class="c" style="left:289px;top:576px;width:89px;height:25px;background:#efefef;color:#333"><span><span style="color:#d41414">0-1</span>(0-0)</span></div><div class="c" style="left:379px;top:576px;width:38px;height:25px;background:#efefef;color:#333"><span>5-4</span></div><div class="c" style="left:418px;top:576px;width:93px;height:25px;background:#efefef;color:#111"><span>斯洛文尼亚</span></div><div class="c" style="left:512px;top:576px;width:51px;height:25px;background:#fdf9f6;color:#333"><span>0.80</span></div><div class="c" style="left:564px;top:576px;width:79px;height:25px;background:#fdf9f6;color:#333"><span>受一球</span></div><div class="c" style="left:644px;top:576px;width:51px;height:25px;background:#fdf9f6;color:#333"><span>1.09</span></div><div class="c" style="left:696px;top:576px;width:66px;height:25px;background:#eef7fb;color:#333"><span>5.71</span></div><div class="c" style="left:763px;top:576px;width:65px;height:25px;background:#eef7fb;color:#333"><span>3.70</span></div><div class="c" style="left:829px;top:576px;width:67px;height:25px;background:#eef7fb;color:#333"><span>1.63</span></div><div class="c" style="left:897px;top:576px;width:37px;height:25px;background:#efefef;color:#1414b4"><span>负</span></div><div class="c" style="left:935px;top:576px;width:38px;height:25px;background:#efefef;color:#12661e"><span>走</span></div><div class="c" style="left:974px;top:576px;width:57px;height:25px;background:#efefef;color:#1414b4"><span>小</span></div><div class="c" style="left:5px;top:602px;width:80px;height:25px;background:#fa9c0a;color:#fff"><span>欧国联</span></div><div class="c" style="left:86px;top:602px;width:75px;height:25px;background:#fff;color:#333"><span>24-10-11</span></div><div class="c" style="left:162px;top:602px;width:126px;height:25px;background:#fff;color:#111"><span>奥地利</span></div><div class="c" style="left:289px;top:602px;width:89px;height:25px;background:#fff;color:#333"><span><span style="color:#d41414">4-0</span>(1-0)</span></div><div class="c" style="left:379px;top:602px;width:38px;height:25px;background:#fff;color:#333"><span>15-3</span></div><div class="c" style="left:418px;top:602px;width:93px;height:25px;background:#fff;color:#111"><span><span style="color:#12661e">哈萨克斯坦</span></span></div><div class="c" style="left:512px;top:602px;width:51px;height:25px;background:#fdf9f6;color:#333"><span>0.99</span></div><div class="c" style="left:564px;top:602px;width:79px;height:25px;background:#fdf9f6;color:#333"><span>两球半</span></div><div class="c" style="left:644px;top:602px;width:51px;height:25px;background:#fdf9f6;color:#333"><span>0.90</span></div><div class="c" style="left:696px;top:602px;width:66px;height:25px;background:#eef7fb;color:#333"><span>1.12</span></div><div class="c" style="left:763px;top:602px;width:65px;height:25px;background:#eef7fb;color:#333"><span>8.89</span></div><div class="c" style="left:829px;top:602px;width:67px;height:25px;background:#eef7fb;color:#333"><span>19.79</span></div><div class="c" style="left:897px;top:602px;width:37px;height:25px;background:#fff;color:#1414b4"><span>负</span></div><div class="c" style="left:935px;top:602px;width:38px;height:25px;background:#fff;color:#1414b4"><span>输</span></div><div class="c" style="left:974px;top:602px;width:57px;height:25px;background:#fff;color:#d41414"><span>大</span></div><div class="c" style="left:5px;top:628px;width:80px;height:25px;background:#fa9c0a;color:#fff"><span>欧国联</span></div><div class="c" style="left:86px;top:628px;width:75px;height:25px;background:#efefef;color:#333"><span>24-09-10</span></div><div class="c" style="left:162px;top:628px;width:126px;height:25px;background:#efefef;color:#111"><span>斯洛文尼亚</span></div><div class="c" style="left:289px;top:628px;width:89px;height:25px;background:#efefef;color:#333"><span><span style="color:#d41414">3-0</span>(2-0)</span></div><div class="c" style="left:379px;top:628px;width:38px;height:25px;background:#efefef;color:#333"><span>5-0</span></div><div class="c" style="left:418px;top:628px;width:93px;height:25px;background:#efefef;color:#111"><span><span style="color:#12661e">哈萨克斯坦</span></span></div><div class="c" style="left:512px;top:628px;width:51px;height:25px;background:#fdf9f6;color:#333"><span>1.07</span></div><div class="c" style="left:564px;top:628px;width:79px;height:25px;background:#fdf9f6;color:#333"><span>球半</span></div><div class="c" style="left:644px;top:628px;width:51px;height:25px;background:#fdf9f6;color:#333"><span>0.82</span></div><div class="c" style="left:696px;top:628px;width:66px;height:25px;background:#eef7fb;color:#333"><span>1.32</span></div><div class="c" style="left:763px;top:628px;width:65px;height:25px;background:#eef7fb;color:#333"><span>4.92</span></div><div class="c" style="left:829px;top:628px;width:67px;height:25px;background:#eef7fb;color:#333"><span>10.10</span></div><div class="c" style="left:897px;top:628px;width:37px;height:25px;background:#efefef;color:#1414b4"><span>负</span></div><div class="c" style="left:935px;top:628px;width:38px;height:25px;background:#efefef;color:#1414b4"><span>输</span></div><div class="c" style="left:974px;top:628px;width:57px;height:25px;background:#efefef;color:#d41414"><span>大</span></div><div class="c" style="left:5px;top:654px;width:80px;height:25px;background:#fa9c0a;color:#fff"><span>欧国联</span></div><div class="c" style="left:86px;top:654px;width:75px;height:25px;background:#fff;color:#333"><span>24-09-06</span></div><div class="c" style="left:162px;top:654px;width:126px;height:25px;background:#fff;color:#111"><span><span style="color:#12661e">哈萨克斯坦</span></span></div><div class="c" style="left:289px;top:654px;width:89px;height:25px;background:#fff;color:#333"><span><span style="color:#d41414">0-0</span>(0-0)</span></div><div class="c" style="left:379px;top:654px;width:38px;height:25px;background:#fff;color:#333"><span>1-12</span></div><div class="c" style="left:418px;top:654px;width:93px;height:25px;background:#fff;color:#111"><span>挪威</span></div><div class="c" style="left:512px;top:654px;width:51px;height:25px;background:#fdf9f6;color:#333"><span>1.03</span></div><div class="c" style="left:564px;top:654px;width:79px;height:25px;background:#fdf9f6;color:#333"><span>受球半</span></div><div class="c" style="left:644px;top:654px;width:51px;height:25px;background:#fdf9f6;color:#333"><span>0.86</span></div><div class="c" style="left:696px;top:654px;width:66px;height:25px;background:#eef7fb;color:#333"><span>9.91</span></div><div class="c" style="left:763px;top:654px;width:65px;height:25px;background:#eef7fb;color:#333"><span>5.46</span></div><div class="c" style="left:829px;top:654px;width:67px;height:25px;background:#eef7fb;color:#333"><span>1.29</span></div><div class="c" style="left:897px;top:654px;width:37px;height:25px;background:#fff;color:#12661e"><span>平</span></div><div class="c" style="left:935px;top:654px;width:38px;height:25px;background:#fff;color:#d41414"><span>赢</span></div><div class="c" style="left:974px;top:654px;width:57px;height:25px;background:#fff;color:#1414b4"><span>小</span></div><div class="c" style="left:5px;top:680px;width:80px;height:25px;background:#4666bc;color:#fff"><span>国际友谊</span></div><div class="c" style="left:86px;top:680px;width:75px;height:25px;background:#efefef;color:#333"><span>24-06-11</span></div><div class="c" style="left:162px;top:680px;width:126px;height:25px;background:#efefef;color:#111"><span>阿塞拜疆(中)</span></div><div class="c" style="left:289px;top:680px;width:89px;height:25px;background:#efefef;color:#333"><span><span style="color:#d41414">3-2</span>(1-2)</span></div><div class="c" style="left:379px;top:680px;width:38px;height:25px;background:#efefef;color:#333"><span>8-4</span></div><div class="c" style="left:418px;top:680px;width:93px;height:25px;background:#efefef;color:#111"><span><span style="color:#12661e">哈萨克斯坦</span></span></div><div class="c" style="left:512px;top:680px;width:51px;height:25px;background:#fdf9f6;color:#333"><span>1.04</span></div><div class="c" style="left:564px;top:680px;width:79px;height:25px;background:#fdf9f6;color:#333"><span>平/半</span></div><div class="c" style="left:644px;top:680px;width:51px;height:25px;background:#fdf9f6;color:#333"><span>0.82</span></div><div class="c" style="left:696px;top:680px;width:66px;height:25px;background:#eef7fb;color:#333"><span>2.30</span></div><div class="c" style="left:763px;top:680px;width:65px;height:25px;background:#eef7fb;color:#333"><span>3.10</span></div><div class="c" style="left:829px;top:680px;width:67px;height:25px;background:#eef7fb;color:#333"><span>3.14</span></div><div class="c" style="left:897px;top:680px;width:37px;height:25px;background:#efefef;color:#1414b4"><span>负</span></div><div class="c" style="left:935px;top:680px;width:38px;height:25px;background:#efefef;color:#1414b4"><span>输</span></div><div class="c" style="left:974px;top:680px;width:57px;height:25px;background:#efefef;color:#d41414"><span>大</span></div><div class="c" style="left:5px;top:706px;width:1026px;height:25px;background:#fff;color:#333;word-spacing:2px"><span>近<span style="color:#d41414">10</span>场,胜1平2负7, 胜率:<span style="color:#d41414">10%</span> 让胜率:<span style="color:#d41414">14.3%</span> 大率:<span style="color:#d41414">57.1%</span> 单率:<span style="color:#d41414">40%</span></span></div><div class="sel" style="left:544px;top:407px;width:59px;height:16px;"><span style="position:absolute;left:4px;top:0px;line-height:16px;font-size:13px;font-family:'Liberation Sans', sans-serif">Crow*</span><span style="position:absolute;left:44px;top:4px"><svg width="12" height="7" viewBox="-1 -1 12 7" style="display:block"><path d="M0.6 0.6 L5.0 4.7 L9.4 0.6" fill="none" stroke="#000" stroke-width="2" stroke-linecap="butt" stroke-linejoin="miter"/></svg></span></div><div class="sel" style="left:612px;top:407px;width:49px;height:16px;"><span style="position:absolute;left:4px;top:0px;line-height:16px;font-size:13px;font-family:'Liberation Sans', sans-serif">终指</span><span style="position:absolute;left:34px;top:4px"><svg width="12" height="7" viewBox="-1 -1 12 7" style="display:block"><path d="M0.6 0.6 L5.0 4.7 L9.4 0.6" fill="none" stroke="#000" stroke-width="2" stroke-linecap="butt" stroke-linejoin="miter"/></svg></span></div><div class="sel" style="left:732px;top:407px;width:68px;height:16px;"><span style="position:absolute;left:4px;top:0px;line-height:16px;font-size:13px;font-family:'Liberation Sans', sans-serif">平均值 </span><span style="position:absolute;left:53px;top:4px"><svg width="12" height="7" viewBox="-1 -1 12 7" style="display:block"><path d="M0.6 0.6 L5.0 4.7 L9.4 0.6" fill="none" stroke="#000" stroke-width="2" stroke-linecap="butt" stroke-linejoin="miter"/></svg></span></div><div class="sel" style="left:809px;top:407px;width:49px;height:16px;"><span style="position:absolute;left:4px;top:0px;line-height:16px;font-size:13px;font-family:'Liberation Sans', sans-serif">终指</span><span style="position:absolute;left:34px;top:4px"><svg width="12" height="7" viewBox="-1 -1 12 7" style="display:block"><path d="M0.6 0.6 L5.0 4.7 L9.4 0.6" fill="none" stroke="#000" stroke-width="2" stroke-linecap="butt" stroke-linejoin="miter"/></svg></span></div><div class="sel" style="left:938px;top:407px;width:49px;height:16px;"><span style="position:absolute;left:4px;top:0px;line-height:16px;font-size:13px;font-family:'Liberation Sans', sans-serif">全场</span><span style="position:absolute;left:34px;top:4px"><svg width="12" height="7" viewBox="-1 -1 12 7" style="display:block"><path d="M0.6 0.6 L5.0 4.7 L9.4 0.6" fill="none" stroke="#000" stroke-width="2" stroke-linecap="butt" stroke-linejoin="miter"/></svg></span></div>
</body></html>
